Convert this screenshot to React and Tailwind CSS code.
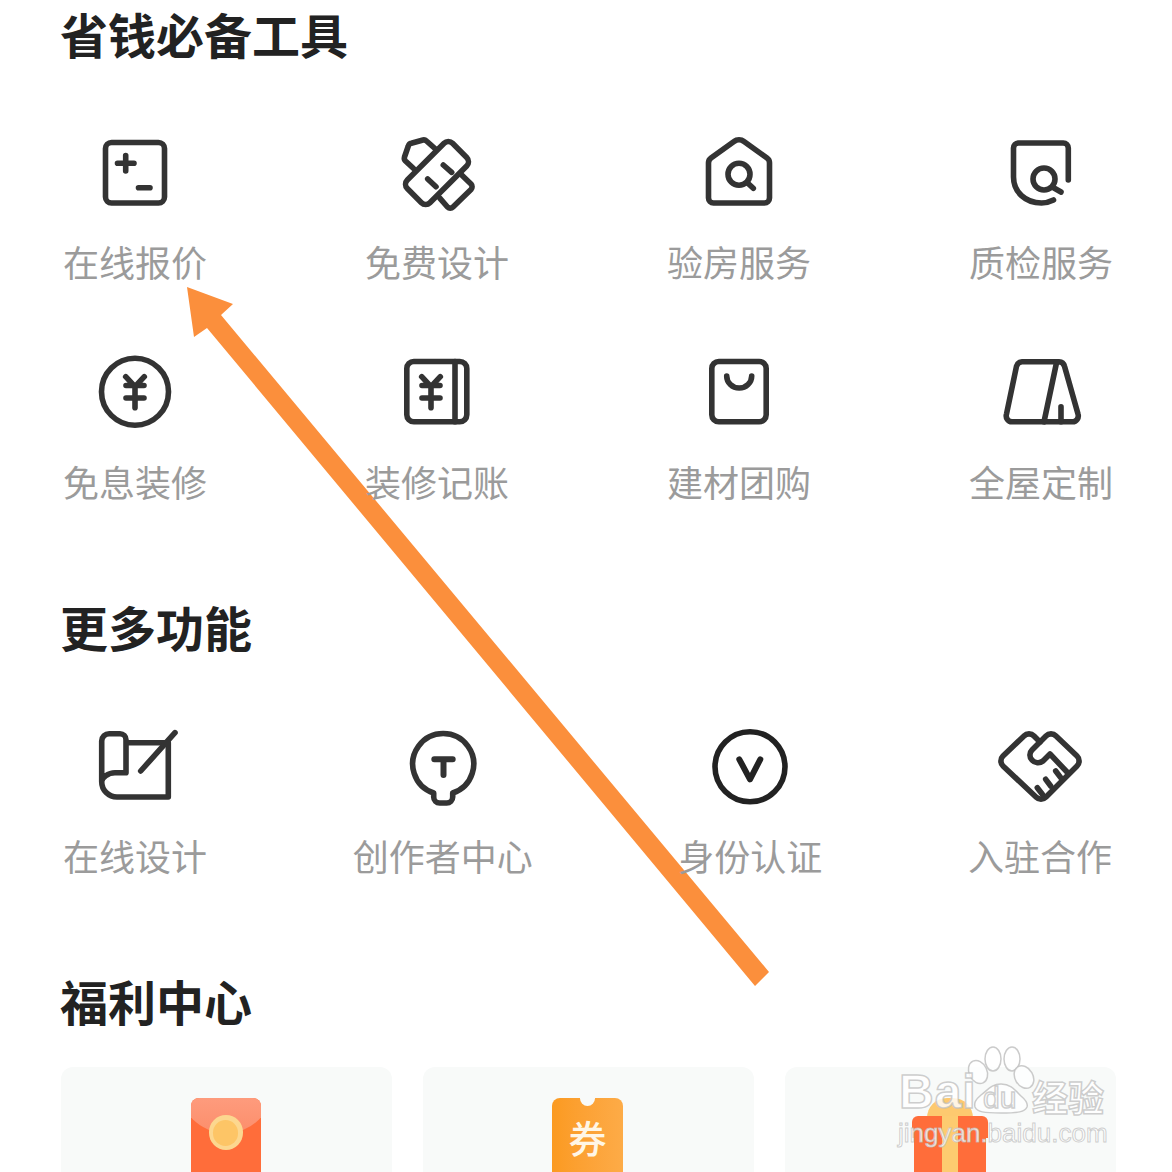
const cjk = "font-['Noto_Sans_CJK_SC','Noto_Sans',sans-serif]";

function Icon({ children, color = '#333', width = 5.6 }) {
  return (
    <svg
      width="80"
      height="80"
      viewBox="0 0 80 80"
      fill="none"
      stroke={color}
      strokeWidth={width}
      strokeLinecap="round"
      strokeLinejoin="round"
      className="overflow-visible"
    >
      {children}
    </svg>
  );
}

const yen = (x) => (
  <path d={`M${x - 9.3} 24.7L${x} 34.7L${x + 9.3} 24.7M${x - 9} 33.5H${x + 9}M${x - 9} 46H${x + 9}M${x} 34.7V55.7`} />
);

const tools = [
  {
    label: '在线报价',
    icon: (
      <Icon>
        <rect x="10.5" y="10.5" width="59" height="60.5" rx="6" />
        <path d="M22.5 31.3H39M30.7 23.5V39M43.5 55.7H55" />
      </Icon>
    ),
  },
  {
    label: '免费设计',
    icon: (
      <Icon>
        <rect x="8" y="25" width="64" height="32" rx="6" transform="rotate(-45 40 41)" />
        <path d="M16.3 36.3L8.5 29a4 4 0 0 1-1-4L11.3 14a4 4 0 0 1 3-2.7L26 8a4 4 0 0 1 3.5 1L38.5 17" />
        <path d="M64.7 43L74 52a4 4 0 0 1 0 5.5L56 75a4 4 0 0 1-5.5 0L43 66.3" />
        <path d="M46.3 33L54.7 40.3M30.7 47L39 54.7" />
      </Icon>
    ),
  },
  {
    label: '验房服务',
    icon: (
      <Icon>
        <path d="M9.5 66V31a6 6 0 0 1 2.5-5L35 9.5a8 8 0 0 1 10 0L68 26a6 6 0 0 1 2.5 5V66a5 5 0 0 1-5 5H14.5a5 5 0 0 1-5-5Z" />
        <circle cx="40" cy="42.3" r="11" />
        <path d="M48.3 50.7L54.3 56.3" />
      </Icon>
    ),
  },
  {
    label: '质检服务',
    icon: (
      <Icon>
        <path d="M67.3 48V16a5 5 0 0 0-5-5H17.5a5 5 0 0 0-5 5v29c0 15 12 26 28 26 4 0 8-1 12-3" />
        <circle cx="43" cy="47" r="11" />
        <path d="M51.7 55.3L60 60" />
      </Icon>
    ),
  },
  {
    label: '免息装修',
    icon: (
      <Icon>
        <circle cx="40" cy="39.7" r="33.5" />
        {yen(40)}
      </Icon>
    ),
  },
  {
    label: '装修记账',
    icon: (
      <Icon>
        <rect x="9.8" y="9.5" width="60" height="60.3" rx="7" />
        <path d="M58 9.5V69.8" />
        {yen(34)}
      </Icon>
    ),
  },
  {
    label: '建材团购',
    icon: (
      <Icon>
        <rect x="12.8" y="9.5" width="54.4" height="60.3" rx="7" />
        <path d="M27.7 24a12.5 12 0 0 0 25 0" />
      </Icon>
    ),
  },
  {
    label: '全屋定制',
    icon: (
      <Icon>
        <path d="M21 9.8h37a6 6 0 0 1 5.5 4.5L77 62a6 6 0 0 1-5.5 7.8H11a6 6 0 0 1-5.5-7.8L15.5 14.3a6 6 0 0 1 5.5-4.5Z" />
        <path d="M55.7 9.8L43 69.8M60 54.7V69.8" />
      </Icon>
    ),
  },
];

const more = [
  {
    label: '在线设计',
    icon: (
      <Icon>
        <path d="M31 16.7H73.3V71H22a15.3 15.3 0 0 1-15.3-15.3V15a7.5 7.5 0 0 1 7.5-7.3H25a6 6 0 0 1 6 6V46.7H20c-7 0-13.3 5-13.3 9" />
        <path d="M80 6.7L45.7 45" />
      </Icon>
    ),
  },
  {
    label: '创作者中心',
    icon: (
      <Icon>
        <path d="M30.7 67V71a6 6 0 0 0 6 6h7a6 6 0 0 0 6-6V67A30.5 30.5 0 1 0 30.7 67Z" />
        <path d="M31.3 33.3H49.7M40.5 33.3V49" strokeWidth="6" />
      </Icon>
    ),
  },
  {
    label: '身份认证',
    icon: (
      <Icon color="#222">
        <circle cx="40" cy="40.8" r="35" />
        <path d="M29.3 33.3L40 53.3L50.3 33.3" strokeWidth="6" />
      </Icon>
    ),
  },
  {
    label: '入驻合作',
    icon: (
      <Icon>
        <path d="M3 30L24 10a7 7 0 0 1 10 0L40 16L46 10a7 7 0 0 1 10 0L77 30a7 7 0 0 1 0 10L46 71a7 7 0 0 1-10 0L3 40a7 7 0 0 1 0-10Z" />
        <path d="M40 16L32 24a7 7 0 0 0 0 10a8 8 0 0 0 11 1L50 28L67 46" />
        <path d="M55.7 45L60.7 51.7M45.7 53.3L50.7 60M37.3 61.7L42.3 68.3" />
      </Icon>
    ),
  },
];

function Heading({ children }) {
  return <h2 className="h-[60px] text-[48px] leading-[52px] font-bold text-[#222] pl-[60px]">{children}</h2>;
}

function Row({ items, className }) {
  return (
    <div className={`flex justify-between pl-[63px] ${className}`}>
      {items.map((item) => (
        <div key={item.label} className="flex flex-col items-center">
          <div className="h-20 w-20">{item.icon}</div>
          <span className="mt-[27px] h-[50px] text-[36px] leading-[45px] whitespace-nowrap text-[#9b9b9b]">{item.label}</span>
        </div>
      ))}
    </div>
  );
}

function Card({ children }) {
  return <div className="flex h-[200px] justify-center rounded-xl bg-[#f8faf9] pt-[31px]">{children}</div>;
}

function Watermark() {
  const outline = "[-webkit-text-stroke:1.5px_rgba(190,190,190,0.75)] text-white/80 font-['Liberation_Sans',sans-serif]";
  return (
    <div className="absolute left-[890px] top-[1040px] z-20 h-[120px] w-[230px]">
      <svg width="230" height="120" className="absolute left-0 top-0" fill="rgba(255,255,255,0.75)" stroke="rgba(190,190,190,0.8)" strokeWidth="1.5">
        <ellipse cx="103" cy="19" rx="8" ry="12" />
        <ellipse cx="122" cy="19" rx="8" ry="12" />
        <ellipse cx="88" cy="32" rx="9" ry="12" transform="rotate(-25 88 32)" />
        <ellipse cx="134" cy="37" rx="9" ry="12" transform="rotate(-30 134 37)" />
        <path d="M111 44c10 0 14 6 20 12 6 5 7 8 6 11-2 5-9 6-26 6s-24-1-26-6c-1-4 0-7 6-12 7-5 10-11 20-11Z" />
      </svg>
      <span className={`absolute left-[9px] top-[27px] text-[48px] leading-[50px] font-bold tracking-[1px] ${outline}`}>Bai</span>
      <span className={`absolute left-[93px] top-[41px] text-[30px] leading-[34px] ${outline}`}>du</span>
      <span className={`absolute left-[142px] top-[36px] text-[36px] leading-[40px] font-bold [-webkit-text-stroke:1.5px_rgba(190,190,190,0.75)] text-white/80 ${cjk}`}>经验</span>
      <span className="absolute left-[8px] top-[78px] text-[26px] leading-[30px] [-webkit-text-stroke:1px_rgba(190,190,190,0.75)] text-white/80 font-['Liberation_Sans',sans-serif]">jingyan.baidu.com</span>
    </div>
  );
}

export default function App() {
  return (
    <div className={`relative h-[1172px] w-[1172px] overflow-hidden bg-white ${cjk}`}>
      <svg width="1172" height="1172" className="absolute left-0 top-0">
        <polygon points="187,287 233,304 221,315 769,972 755,986 207,328 194,337" fill="#fb8f3c" />
      </svg>

      <div className="relative z-10 pt-[7px]">
        <Heading>省钱必备工具</Heading>
        <div className="mt-[65px] flex flex-col gap-[63px]">
          <Row items={tools.slice(0, 4)} className="pr-[59px]" />
          <Row items={tools.slice(4)} className="pr-[59px]" />
        </div>

        <div className="mt-[91px]">
          <Heading>更多功能</Heading>
        </div>
        <div className="mt-[66px]">
          <Row items={more} className="pr-[60px]" />
        </div>

        <div className="mt-[91px]">
          <Heading>福利中心</Heading>
        </div>

        <div className="mt-[33px] grid grid-cols-3 gap-[31px] pl-[61px] pr-[56px]">
          <Card>
            <div className="relative h-[80px] w-[70px] -translate-x-px overflow-hidden rounded-t-lg bg-[#ff6d3a]">
              <div className="absolute -left-[12px] -top-[30px] h-[65px] w-[94px] rounded-b-[50px] bg-gradient-to-b from-[#ffa68c] to-[#fc8e6b]" />
              <div className="absolute left-[18px] top-[17px] flex h-[35px] w-[34px] items-center justify-center rounded-full bg-[#fcd78f]">
                <div className="h-[26px] w-[25px] rounded-full bg-[#fdc566]" />
              </div>
            </div>
          </Card>
          <Card>
            <div className="relative flex h-[80px] w-[71px] -translate-x-px justify-center overflow-hidden rounded-t-lg bg-gradient-to-r from-[#fb9a20] to-[#fdab47] pt-[14px]">
              <div className="absolute -top-[7px] left-[28px] h-[15px] w-[15px] rounded-full bg-[#f8faf9]" />
              <span className="text-[38px] leading-[50px] font-medium text-[#fff6e6]">券</span>
            </div>
          </Card>
          <Card>
            <div className="relative h-[80px] w-[76px] -translate-x-px">
              <div className="absolute left-[15px] top-0 h-[24px] w-[46px] rounded-t-[20px] bg-[#fdc96f]" />
              <div className="absolute left-0 top-[18px] h-[22px] w-[76px] rounded-t-md bg-[#ff6d3a]" />
              <div className="absolute left-[2px] top-[36px] h-[44px] w-[72px] bg-[#ff6d3a]" />
              <div className="absolute left-[30px] top-[18px] h-[62px] w-[16px] bg-[#fdcb70]" />
            </div>
          </Card>
        </div>
      </div>

      <Watermark />
    </div>
  );
}
